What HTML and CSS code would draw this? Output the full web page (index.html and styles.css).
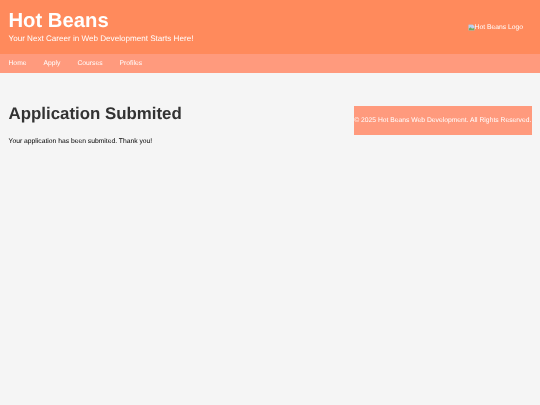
FILE: index.html
```html
<!DOCTYPE html>
<html lang="en">
<head>
<meta charset="utf-8">
<title>Application Submited</title>
<link rel="stylesheet" href="styles.css">
</head>
<body>
<header class="site-header">
  <div class="brand soft">
    <h1 class="brand-title">Hot Beans</h1>
    <p class="brand-tag">Your Next Career in Web Development Starts Here!</p>
  </div>
  <div class="logo soft">
    <svg class="broken" viewBox="0 0 16 16" aria-hidden="true">
      <path d="M1.5 1.5H11L14.5 5V14.5H1.5Z" fill="#f4f4f4" stroke="#a9a9a9"/>
      <path d="M2 2H11V5H14V9H2Z" fill="#b9cdf0"/>
      <path d="M2 14V10L6 7.5L9 10.5L14 9V14Z" fill="#6fa860"/>
    </svg><span>Hot Beans Logo</span>
  </div>
</header>
<nav class="site-nav soft">
  <a href="#">Home</a>
  <a href="#">Apply</a>
  <a href="#">Courses</a>
  <a href="#">Profiles</a>
</nav>
<div class="layout">
  <main class="content soft">
    <h2 class="page-title">Application Submited</h2>
    <p class="message">Your application has been submited. Thank you!</p>
  </main>
  <footer class="site-footer"><span class="soft">© 2025 Hot Beans Web Development. All Rights Reserved.</span></footer>
</div>
</body>
</html>
```
FILE: styles.css
```css
* { box-sizing: border-box; }
html, body { height: 100%; }
body {
  margin: 0;
  background: #f5f5f5;
  font-family: "Liberation Sans", Arial, sans-serif;
  color: #000;
  text-rendering: geometricPrecision;
}
.soft { filter: blur(0.38px); }
.site-header {
  height: 54px;
  background: #ff8a5c;
  color: #fff;
  display: flex;
  justify-content: space-between;
  align-items: center;
  padding: 0 17px 0 8.5px;
}
.brand-title {
  margin: 0;
  font-size: 20.25px;
  line-height: 24px;
  font-weight: 700;
}
.brand-tag {
  margin: 0;
  font-size: 8.1px;
  line-height: 12px;
}
.logo {
  display: flex;
  align-items: center;
  font-size: 6.75px;
  margin-top: 1px;
}
.broken { width: 7px; height: 7px; flex: none; }
.site-nav {
  height: 19px;
  background: #ff9a7d;
  display: flex;
  align-items: center;
  gap: 17px;
  padding-left: 8.5px;
}
.site-nav a {
  color: #fff;
  text-decoration: none;
  font-size: 6.75px;
}
.layout {
  display: flex;
  justify-content: space-between;
  align-items: flex-start;
  padding: 33px 8.5px 0 8.5px;
}
.page-title {
  margin: 0;
  color: #333;
  font-size: 16.875px;
  line-height: 16px;
  font-weight: 700;
}
.message {
  margin: 15px 0 0;
  font-size: 6.75px;
  line-height: 10px;
}
.site-footer {
  width: 177.5px;
  height: 29px;
  background: #ff9a7d;
  color: #fff;
  font-size: 6.75px;
  display: flex;
  align-items: center;
  justify-content: center;
  white-space: nowrap;
}
```
